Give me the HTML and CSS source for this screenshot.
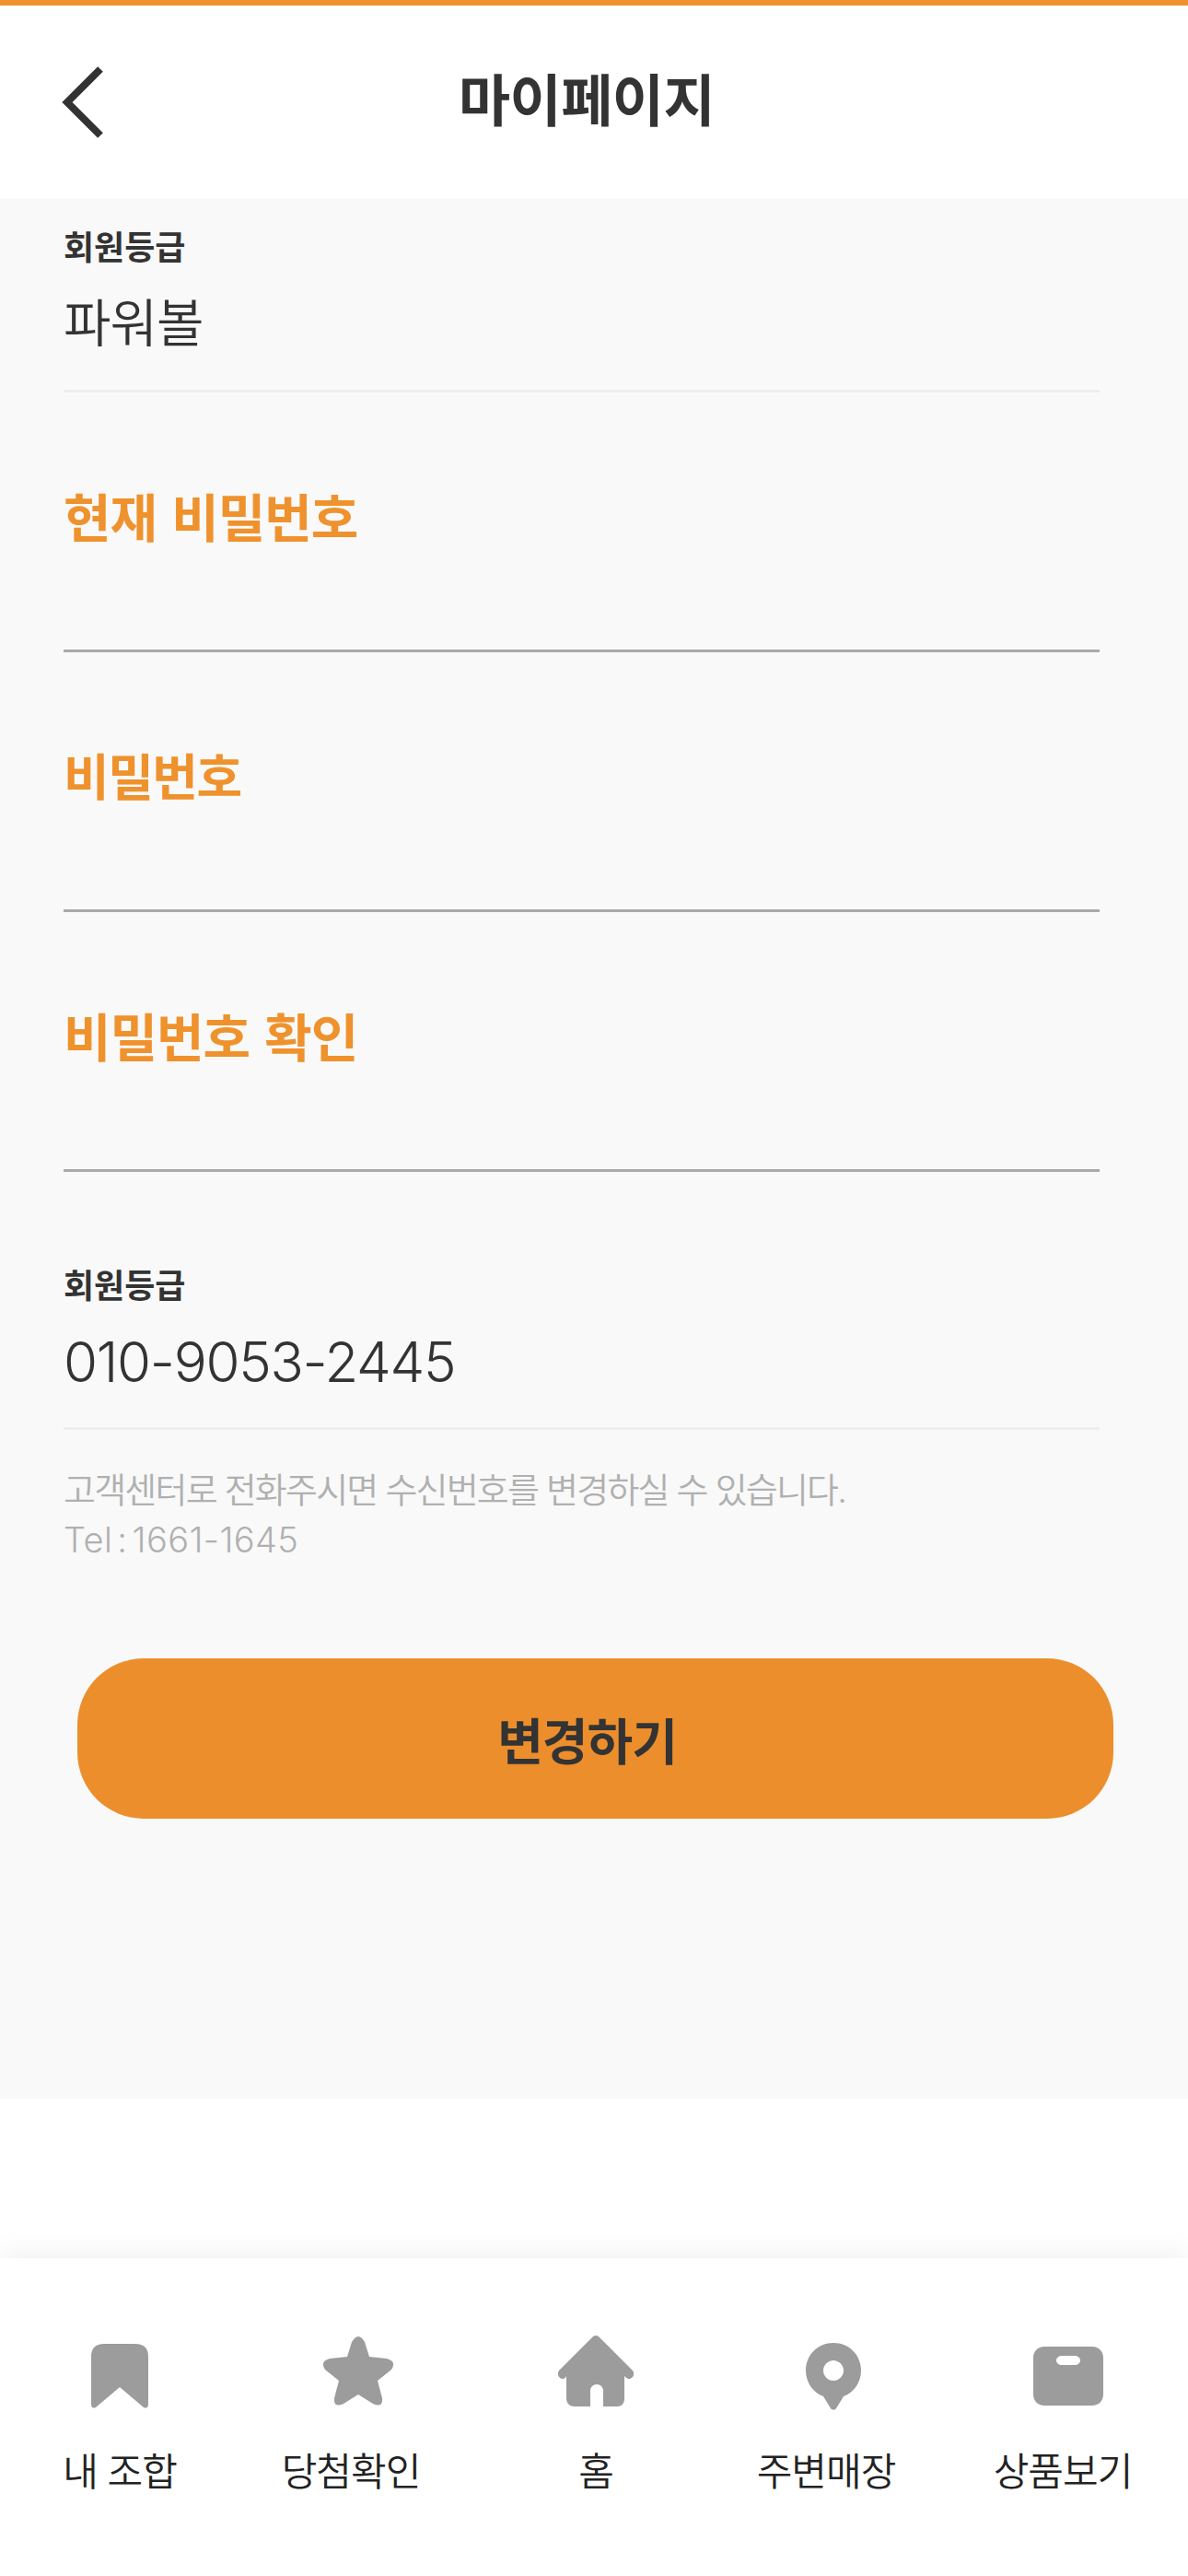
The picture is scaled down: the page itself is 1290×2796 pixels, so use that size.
FILE: index.html
```html
<!DOCTYPE html>
<html lang="ko">
<head>
    <meta charset="UTF-8">
    <meta name="viewport" content="width=device-width, initial-scale=1.0">
    <title>마이페이지</title>
    <link rel="stylesheet" href="styles.css">
</head>
<body>
    <header class="top">
        <button class="back" aria-label="뒤로">
            <svg width="46" height="78" viewBox="0 0 46 78"><polyline points="42,3 6,39 42,75" fill="none" stroke="#333" stroke-width="8"/></svg>
        </button>
        <h1 class="title">마이페이지</h1>
    </header>

    <main class="content">
        <div class="info">
            <div class="info-label">회원등급</div>
            <div class="info-value">파워볼</div>
        </div>

        <label class="field">
            <span class="field-label">현재 비밀번호</span>
        </label>
        <label class="field">
            <span class="field-label field-short">비밀번호</span>
        </label>
        <label class="field">
            <span class="field-label">비밀번호 확인</span>
        </label>

        <div class="info info-phone">
            <div class="info-label">회원등급</div>
            <div class="info-value number">010-9053-2445</div>
        </div>

        <p class="hint">고객센터로 전화주시면 수신번호를 변경하실 수 있습니다.<br><span class="hint-tel">Tel : 1661-1645</span></p>

        <button class="submit">변경하기</button>
    </main>

    <nav class="tabs">
        <a class="tab">
            <svg class="tab-icon" width="62" height="84" viewBox="0 0 62 84"><path transform="translate(0 9)" d="M14 0H48Q62 0 62 14V65Q62 71 57 69L31 47 5 69Q0 71 0 65V14Q0 0 14 0Z" fill="#9c9c9c"/></svg>
            <span>내 조합</span>
        </a>
        <a class="tab tab-star">
            <svg class="tab-icon" width="78" height="84" viewBox="0 0 78 84"><path transform="translate(0 1)" d="M32 6Q39 -6 46 6L51 22 70 24Q81 27 75 36L60 48 65 67Q66 78 55 73L39 63 23 73Q12 78 13 67L18 48 3 36Q-3 27 8 24L27 22Z" fill="#9c9c9c"/></svg>
            <span>당첨확인</span>
        </a>
        <a class="tab">
            <svg class="tab-icon" width="82" height="84" viewBox="0 0 82 84"><path fill-rule="evenodd" d="M41 0C43 0 44 1 45 2L81 38C84 42 81 47 77 47 75 47 74 46 72 44V68C72 74 69 77 64 77H49V60C49 56 46 53 42 53S35 56 35 60V77H18C13 77 9 74 9 68V44C8 46 7 47 5 47 1 47-2 42 1 38L37 2C38 1 39 0 41 0Z" fill="#9c9c9c"/></svg>
            <span>홈</span>
        </a>
        <a class="tab tab-pin">
            <svg class="tab-icon" width="60" height="84" viewBox="0 0 60 84"><path transform="translate(0 8)" fill-rule="evenodd" d="M30 0C47 0 60 13 60 30 60 43 52 54 41 58L33 71C32 73 28 73 27 71L19 58C8 54 0 43 0 30 0 13 13 0 30 0ZM30 19C24 19 19 24 19 30S24 41 30 41 41 36 41 30 36 19 30 19Z" fill="#9c9c9c"/></svg>
            <span>주변매장</span>
        </a>
        <a class="tab tab-box">
            <svg class="tab-icon" width="76" height="84" viewBox="0 0 76 84"><path transform="translate(0 12)" fill-rule="evenodd" d="M12 0H64C71 0 76 5 76 12V52C76 59 71 64 64 64H12C5 64 0 59 0 52V12C0 5 5 0 12 0ZM31 10C28 10 25 12 25 15S28 20 31 20H45C48 20 51 18 51 15S48 10 45 10Z" fill="#9c9c9c"/></svg>
            <span>상품보기</span>
        </a>
    </nav>
</body>
</html>
```

FILE: styles.css
```css
* {
    box-sizing: border-box;
}

body {
    margin: 0;
    width: 1290px;
    height: 2796px;
    background-color: #fff;
    color: #333;
    font-family: "Inter", "Noto Sans CJK KR", "Noto Sans", sans-serif;
    display: flex;
    flex-direction: column;
}

.top {
    height: 216px;
    border-top: 6px solid #ef922d;
    padding: 0 83px 0 67px;
    display: grid;
    grid-template-columns: 1fr auto 1fr;
    align-items: center;
}

.back {
    width: 46px;
    height: 78px;
    padding: 0;
    border: 0;
    background: none;
}

.title {
    margin: 0 0 3px;
    font-size: 61px;
    font-weight: 700;
    letter-spacing: -0.5px;
    line-height: 80px;
}

.content {
    height: 2062px;
    background-color: #f9f9f9;
    padding: 0 96px 0 69px;
}

.info {
    height: 210px;
    padding-top: 28px;
    border-bottom: 3px solid #eee;
}

.info-label {
    font-size: 36px;
    font-weight: 700;
    letter-spacing: 0;
    line-height: 50px;
}

.info-value {
    margin-top: 22px;
    font-size: 56px;
    font-weight: 350;
    letter-spacing: -1px;
    line-height: 70px;
}

.number {
    font-size: 60px;
    letter-spacing: -1.3px;
}

.info-phone {
    height: 217px;
    margin-top: 63px;
    padding-top: 36px;
}

.field {
    display: block;
    height: 282px;
    padding-top: 102px;
    border-bottom: 3px solid #aaa;
}

.field-label {
    display: block;
    color: #ef922d;
    font-size: 56px;
    font-weight: 700;
    letter-spacing: -1px;
    word-spacing: 4px;
    line-height: 70px;
}

.field-short {
    font-size: 54px;
    letter-spacing: -1.5px;
}

.hint {
    margin: 38px 0 0;
    color: #b0b0b0;
    font-size: 38px;
    font-weight: 350;
    letter-spacing: -1.8px;
    line-height: 54px;
}

.hint-tel {
    letter-spacing: 0.4px;
    word-spacing: -6px;
}

.submit {
    display: block;
    width: 1125px;
    height: 174px;
    margin: 102px 0 0 15px;
    padding: 0 18px 0 0;
    border: 0;
    border-radius: 72px;
    background-color: #ec8e2c;
    color: #333;
    font-family: inherit;
    font-size: 54px;
    font-weight: 700;
    letter-spacing: -1px;
}

.tabs {
    margin-top: auto;
    height: 345px;
    padding: 84px 4px 0 20px;
    background-color: #fff;
    box-shadow: 0 -6px 30px rgba(0, 0, 0, 0.06);
    display: grid;
    grid-template-columns: 220px 282px 250px 250px 264px;
}

.tab {
    display: flex;
    flex-direction: column;
    align-items: center;
    color: #222;
    font-size: 42px;
    font-weight: 350;
    letter-spacing: -1px;
}

.tab span {
    margin-top: 34px;
    line-height: 60px;
}

.tab-star .tab-icon,
.tab-pin .tab-icon {
    margin-left: 16px;
}

.tab-box .tab-icon {
    margin-left: 12px;
}
```
